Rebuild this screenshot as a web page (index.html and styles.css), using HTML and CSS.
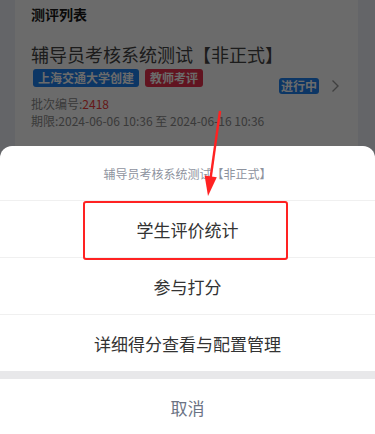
FILE: index.html
```html
<!DOCTYPE html>
<html lang="zh-CN">
<head>
<meta charset="utf-8">
<title>测评列表</title>
<link rel="stylesheet" href="styles.css">
</head>
<body>
<div class="page">
  <div class="card">
    <h2 class="card-title">测评列表</h2>
    <div class="item">
      <div class="item-main">
        <div class="item-name">辅导员考核系统测试【非正式】</div>
        <div class="tags">
          <span class="tag tag-blue">上海交通大学创建</span>
          <span class="tag tag-red">教师考评</span>
        </div>
        <div class="meta">批次编号:<span class="num">2418</span></div>
        <div class="meta">期限:2024-06-06 10:36 至 2024-06-16 10:36</div>
      </div>
      <div class="item-side">
        <span class="status">进行中</span>
        <svg class="chev" width="9" height="14" viewBox="0 0 9 14"><path d="M1.5 1.5 L7 7 L1.5 12.5" fill="none" stroke="#9a9a9a" stroke-width="1.4"/></svg>
      </div>
    </div>
  </div>
</div>

<div class="mask"></div>

<div class="sheet">
  <div class="sheet-head">辅导员考核系统测试【非正式】</div>
  <div class="sheet-item">学生评价统计</div>
  <div class="sheet-item">参与打分</div>
  <div class="sheet-item last">详细得分查看与配置管理</div>
  <div class="sheet-gap"></div>
  <div class="sheet-item cancel">取消</div>
</div>

<div class="highlight"></div>
<svg class="arrow" width="375" height="434" viewBox="0 0 375 434">
  <line x1="220" y1="111" x2="210.6" y2="178" stroke="#ff2222" stroke-width="2.4"/>
  <polygon points="208,196 216.8,177.2 204.6,175.4" fill="#ff2222"/>
</svg>
</body>
</html>
```

FILE: styles.css
```css
html, body {
  margin: 0;
  padding: 0;
}
body {
  width: 375px;
  height: 434px;
  overflow: hidden;
  position: relative;
  background: #eef0f7;
  font-family: "Noto Sans CJK SC", "Noto Sans", sans-serif;
}
.page {
  padding: 0 17px 0 15px;
}
.card {
  background: #ffffff;
  padding: 4px 18px 20px 16px;
}
.card-title {
  margin: 0;
  font-size: 14px;
  line-height: 20px;
  font-weight: 700;
  color: #1a1a1a;
}
.item {
  display: flex;
  align-items: center;
  margin-top: 18px;
}
.item-main {
  flex: 1;
}
.item-name {
  font-size: 18px;
  line-height: 24px;
  color: #444;
}
.tags {
  display: flex;
  gap: 6px;
  margin: 3px 0 0 2px;
}
.tag {
  font-size: 12px;
  font-weight: 700;
  line-height: 18px;
  padding: 0 5px;
  border-radius: 3px;
  color: #fff;
}
.tag-blue { background: #1d80f0; }
.tag-red { background: #e8304c; }
.meta {
  font-size: 12px;
  line-height: 17px;
  color: #8a8a8a;
}
.tags + .meta {
  margin-top: 8px;
}
.num {
  color: #f03c3c;
}
.item-side {
  display: flex;
  align-items: center;
  gap: 12px;
}
.status {
  font-size: 12px;
  font-weight: 700;
  line-height: 16px;
  padding: 0 2px;
  border-radius: 3px;
  color: #fff;
  background: #1d80f0;
}
.chev {
  display: block;
}
.mask {
  position: absolute;
  inset: 0;
  background: rgba(0, 0, 0, 0.58);
}
.sheet {
  position: absolute;
  left: 0;
  right: 0;
  top: 146px;
  background: #fff;
  border-radius: 12px 12px 0 0;
}
.sheet-head {
  height: 54px;
  display: flex;
  align-items: center;
  justify-content: center;
  font-size: 12px;
  color: #8e939e;
  border-bottom: 1px solid #f0f0f0;
}
.sheet-item {
  height: 56px;
  display: flex;
  align-items: center;
  justify-content: center;
  font-size: 17px;
  color: #333;
  border-bottom: 1px solid #f0f0f0;
}
.sheet-item.last {
  height: 56px;
  border-bottom: none;
}
.sheet-gap {
  height: 8px;
  background: #e8e8ea;
}
.sheet-item.cancel {
  border-bottom: none;
  color: #6b7384;
}
.highlight {
  position: absolute;
  left: 83px;
  top: 201px;
  width: 201px;
  height: 55px;
  border: 2px solid #ff2222;
  border-radius: 3px;
}
.arrow {
  position: absolute;
  left: 0;
  top: 0;
  pointer-events: none;
}
```
